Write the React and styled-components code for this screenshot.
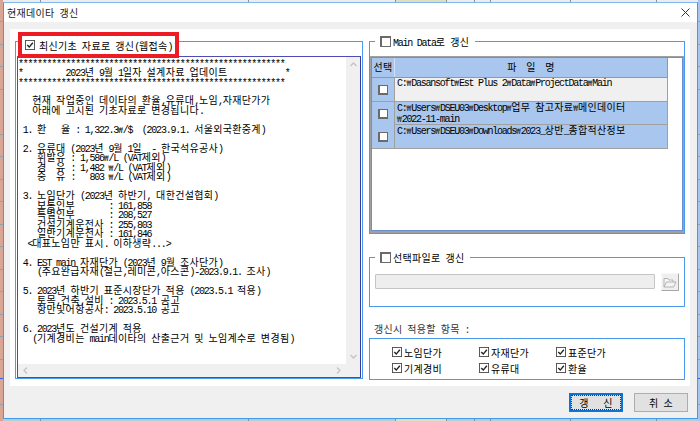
import React from "react";
import styled, {createGlobalStyle} from "styled-components";

const GlobalStyle = createGlobalStyle`
  html, body {
    margin: 0;
    padding: 0;
  }
  * {
    box-sizing: border-box;
  }
`;

// the spreadsheet that shows around the dialog
const Desktop = styled.div`
  width: 700px;
  height: 421px;
  overflow: hidden;
  padding: 2px 2px 2px 3px;
  background:
    linear-gradient(#3a5fd8, #3a5fd8) 0 378px / 100% 1px no-repeat,
    repeating-linear-gradient(180deg, transparent 0 21.5px, #8fa0b0 21.5px 22.5px),
    linear-gradient(90deg, transparent 40px, #8a9298 40px 41px, transparent 41px 248px, #8a9298 248px 249px, transparent 249px 395px, #8a9298 395px 396px, #e2dcc0 396px 446px, #8a9298 446px 447px, transparent 447px 474px, #8a9298 474px 475px, transparent 475px 490px, #8a9298 490px 491px, transparent 491px 570px, #8a9298 570px 571px, transparent 571px 656px, #8a9298 656px 657px, transparent 657px),
    linear-gradient(#ececec, #ececec) 3px 0 / 695px 2px no-repeat,
    linear-gradient(90deg, #dba596 0 3px, #bccad2 3px 698px, #a9c7ee 698px);
`;

const Window = styled.div`
  width: 695px;
  height: 417px;
  display: flex;
  flex-direction: column;
  background: #f0f0f0;
  border: 1px solid #3f9ae8;
  border-top-color: #7fb8ee;
  color: #000;
  font-size: 10px;
  white-space: pre;
`;

const TitleBar = styled.div`
  height: 19px;
  flex: none;
  display: flex;
  align-items: center;
  justify-content: space-between;
  padding: 0 7px 0 3px;
  background: #fff;
  color: #222;
`;

const CloseIcon = styled.svg`
  width: 9px;
  height: 9px;
  stroke: #333;
  stroke-width: 1;
  fill: none;
`;

const Panel = styled.div`
  flex: none;
  margin: 7px 7px 0 6px;
  height: 357px;
  padding: 12px 5px 7px;
  background: #fff;
  display: grid;
  grid-template-columns: 348px 316px;
  column-gap: 6px;
`;

const Group = styled.div`
  position: relative;
  border: 1px solid #4a9af0;
`;

const LeftGroup = styled(Group)`
  height: 338px;
  padding: 14px 1px 0;
`;

const RightColumn = styled.div`
  display: flex;
  flex-direction: column;
`;

const MainGroup = styled(Group)`
  height: 193px;
  padding-top: 14px;
`;

const FileGroup = styled(Group)`
  height: 50px;
  margin-top: 23px;
  padding: 16px 5px 0;
  display: flex;
  align-items: flex-start;
  gap: 6px;
`;

const Legend = styled.div`
  position: absolute;
  top: -8px;
  left: 5px;
  height: 15px;
  padding: 0 6px 0 5px;
  background: #fff;
  display: flex;
  align-items: center;
  gap: 2px;
`;

const RedLegend = styled(Legend)`
  top: -10px;
  left: 2px;
  width: 161px;
  height: 26px;
  padding: 0 0 0 3px;
  border: 4px solid #ed1c24;
  gap: 4px;
`;

const TextBox = styled.div`
  height: 322px;
  display: grid;
  grid-template-columns: 1fr 14px;
  grid-template-rows: 1fr 13px;
  border: 1px solid #4c4cb4;
  border-right-color: #3a3aa0;
`;

const NoticeText = styled.div`
  overflow: hidden;
  background: #fff;
`;

const NoticeLine = styled.div`
  height: 9.52px;
  line-height: 9.52px;
`;

// asterisks sit high in the latin font, so a full row of them is nudged down
const StarLine = styled(NoticeLine)`
  transform: translateY(2px);
`;

const Hangul = styled.span`
  font-family: "Noto Sans CJK KR", sans-serif;
  font-size: 10px;
  letter-spacing: 0.32px;
`;

const Latin = styled.span`
  font-family: "Liberation Mono", "DejaVu Sans Mono", monospace;
  font-size: 10px;
  letter-spacing: -1.24px;
`;

const Won = styled.span`
  font-family: "DejaVu Sans Mono", monospace;
  font-size: 7.9px;
  color: #333;
`;

const ScrollTrack = styled.div`
  background: #f0f0f0;
  display: flex;
  align-items: center;
  justify-content: space-between;
  flex-direction: ${p => (p.$vertical ? "column" : "row")};
  padding: ${p => (p.$vertical ? "4px 0" : "0 4px")};
`;

const ScrollCorner = styled.div`
  background: #f0f0f0;
`;

const Chevron = styled.svg`
  width: 7px;
  height: 7px;
  fill: none;
  stroke: #c4c4c4;
  stroke-width: 1.3;
`;

const Grid = styled.div`
  height: 177px;
  padding: 1px;
  border: 1px solid #a0a0a0;
  border-width: 1px 1px 2px;
  box-shadow: inset 0 0 0 1px #6d8fd0;
  background: #fff;
`;

const Row = styled.div`
  width: 296px;
  height: ${p => p.$height}px;
  display: grid;
  grid-template-columns: 23px 1fr;
  background: ${p => (p.$plain ? "#f0f0f0" : "#a9c7ee")};
  border-bottom: ${p => (p.$head ? "1px solid #6d9fe0" : "1px solid #a0a0a0")};
  line-height: 10px;
`;

const HeadCell = styled.div`
  display: flex;
  align-items: center;
  justify-content: center;
  background: #a9c7ee;
  border-right: 1px solid ${p => (p.$last ? "#6d9fe0" : "#cfe0f6")};
`;

const SelectCell = styled.div`
  display: flex;
  align-items: center;
  justify-content: center;
  background: #a9c7ee;
  border-right: 1px solid #a0a0a0;
`;

const PathCell = styled.div`
  padding: 0 0 0 2px;
  border-right: 1px solid #a0a0a0;
`;

const EmptyBox = styled.span`
  display: inline-block;
  flex: none;
  width: ${p => (p.$large ? 11 : 10)}px;
  height: ${p => (p.$large ? 11 : 10)}px;
  background: #fff;
  border: 2px solid #6a6a6a;
  border-width: ${p => (p.$large ? "2px 1px 1px 2px" : "1px 1px 2px 2px")};
`;

const TickBox = styled.svg`
  flex: none;
  width: 10px;
  height: 10px;
`;

const PathInput = styled.div`
  width: 281px;
  height: 15px;
  background: #eeeeee;
  border: 1px solid #c4c4c4;
  border-radius: 1px;
`;

const FolderButton = styled.div`
  flex: none;
  width: 18px;
  height: 18px;
  margin-top: -1px;
  display: flex;
  align-items: center;
  justify-content: center;
  background: #efefef;
  border: 1px solid #f8f8f8;
  border-right-color: #a8a8a8;
  border-bottom-color: #a8a8a8;
`;

const FolderIcon = styled.svg`
  width: 14px;
  height: 13px;
  fill: #f4f4f4;
  stroke: #b4b4b4;
  stroke-width: 1;
`;

const SectionLabel = styled.div`
  height: 31px;
  padding: 15px 0 0 5px;
  line-height: 13px;
  color: #333;
`;

const ItemGroup = styled(Group)`
  height: 42px;
  padding: 5px 0 0 22px;
  display: grid;
  grid-template-columns: 87px 77px 1fr;
  grid-auto-rows: 16px;
`;

const Item = styled.label`
  display: flex;
  align-items: center;
  gap: 2px;
`;

const Footer = styled.div`
  flex: 1;
  display: flex;
  justify-content: flex-end;
  align-items: flex-start;
  gap: 11px;
  padding: 7px 9px 0 0;
`;

const Button = styled.div`
  position: relative;
  width: 54px;
  height: 19px;
  display: flex;
  align-items: center;
  justify-content: center;
  background: #e1e1e1;
  border: ${p => (p.$primary ? "2px solid #0b74d4" : "1px solid #adadad")};
`;

const FocusRing = styled.span`
  position: absolute;
  inset: 0;
  border: 1px dotted #333;
`;

const Tick = () => (
  <TickBox viewBox="0 0 11 11">
    <rect x="0.5" y="0.5" width="10" height="10" fill="#fff" stroke="#4a4a4a" />
    <path d="M2.5 5.5 L4.7 7.8 L8.6 3" fill="none" stroke="#222" strokeWidth="1.5" />
  </TickBox>
);

// hangul is twice as wide as latin here, like GulimChe
const Gulim = ({children}) =>
  (children.match(/₩|[\x00-\x7f]+|[^\x00-\x7f₩]+/g) || []).map((part, i) => {
    if (part === "₩") return <Won key={i}>{part}</Won>;
    if (/^[\x00-\x7f]/.test(part)) return <Latin key={i}>{part}</Latin>;
    return <Hangul key={i}>{part}</Hangul>;
  });

const stars = "*".repeat(56);

const notice = [
  stars,
  "*         2023년 9월 1일자 설계자료 업데이트            *",
  stars,
  "",
  "   현재 작업중인 데이타의 환율,유류대,노임,자재단가가",
  "   아래에 고시된 기초자료로 변경됩니다.",
  "",
  " 1. 환   율 : 1,322.3₩/$  (2023.9.1. 서울외국환중계)",
  "",
  " 2. 유류대 (2023년 9월 1일  - 한국석유공사)",
  "    휘발유 : 1,586₩/L (VAT제외)",
  "    경  유 : 1,482 ₩/L (VAT제외)",
  "    중  유 :   803 ₩/L (VAT제외)",
  "",
  " 3. 노임단가 (2023년 하반기, 대한건설협회)",
  "    보통인부       : 161,858",
  "    특별인부       : 208,527",
  "    건설기계운전사 : 255,803",
  "    일반기계운전사 : 161,846",
  "  <대표노임만 표시. 이하생략...>",
  "",
  " 4. EST main 자재단가 (2023년 9월 조사단가)",
  "    (주요완급자재(철근,레미콘,아스콘)-2023.9.1. 조사)",
  "",
  " 5. 2023년 하반기 표준시장단가 적용 (2023.5.1 적용)",
  "    토목,건축,설비 : 2023.5.1 공고",
  "    항만및어항공사: 2023.5.10 공고",
  "",
  " 6. 2023년도 건설기계 적용",
  "   (기계경비는 main데이타의 산출근거 및 노임계수로 변경됨)",
];

const paths = [
  {lines: ["C:₩Dasansoft₩Est Plus 2₩Data₩ProjectData₩Main"], plain: true, height: 24},
  {lines: ["C:₩Users₩DSEU03₩Desktop₩업무 참고자료₩메인데이터", "₩2022-11-main"], height: 23},
  {lines: ["C:₩Users₩DSEU03₩Downloads₩2023_상반_종합적산정보"], height: 24},
];

const items = ["노임단가", "자재단가", "표준단가", "기계경비", "유류대", "환율"];

export default function App() {
  return (
    <Desktop>
      <GlobalStyle />
      <Window>
        <TitleBar>
          <span><Gulim>현재데이타 갱신</Gulim></span>
          <CloseIcon viewBox="0 0 9 9">
            <path d="M0.5 0.5 L8.5 8.5 M8.5 0.5 L0.5 8.5" />
          </CloseIcon>
        </TitleBar>
        <Panel>
          <LeftGroup>
            <RedLegend>
              <Tick />
              <span><Gulim>최신기초 자료로 갱신(웹접속)</Gulim></span>
            </RedLegend>
            <TextBox>
              <NoticeText>
                {notice.map((line, i) => {
                  const Line = line === stars ? StarLine : NoticeLine;
                  return (
                    <Line key={i}>
                      <Gulim>{line}</Gulim>
                    </Line>
                  );
                })}
              </NoticeText>
              <ScrollTrack $vertical>
                <Chevron viewBox="0 0 7 7"><path d="M0.5 5 L3.5 2 L6.5 5" /></Chevron>
                <Chevron viewBox="0 0 7 7"><path d="M0.5 2 L3.5 5 L6.5 2" /></Chevron>
              </ScrollTrack>
              <ScrollTrack>
                <Chevron viewBox="0 0 7 7"><path d="M5 0.5 L2 3.5 L5 6.5" /></Chevron>
                <Chevron viewBox="0 0 7 7"><path d="M2 0.5 L5 3.5 L2 6.5" /></Chevron>
              </ScrollTrack>
              <ScrollCorner />
            </TextBox>
          </LeftGroup>
          <RightColumn>
            <MainGroup>
              <Legend>
                <EmptyBox $large />
                <span><Gulim>Main Data로 갱신</Gulim></span>
              </Legend>
              <Grid>
                <Row $head $height={20}>
                  <HeadCell><span><Gulim>선택</Gulim></span></HeadCell>
                  <HeadCell $last><span><Gulim>파  일  명</Gulim></span></HeadCell>
                </Row>
                {paths.map((path, i) => (
                  <Row key={i} $plain={path.plain} $height={path.height}>
                    <SelectCell>
                      <EmptyBox />
                    </SelectCell>
                    <PathCell>
                      {path.lines.map(line => (
                        <div key={line}>
                          <Gulim>{line}</Gulim>
                        </div>
                      ))}
                    </PathCell>
                  </Row>
                ))}
              </Grid>
            </MainGroup>
            <FileGroup>
              <Legend>
                <EmptyBox $large />
                <span><Gulim>선택파일로 갱신</Gulim></span>
              </Legend>
              <PathInput />
              <FolderButton>
                <FolderIcon viewBox="0 0 14 13">
                  <path d="M1 11 V2.5 H5 L6 4 H10 V6 M1 11 L3.5 6 H13 L10.5 11 Z" />
                </FolderIcon>
              </FolderButton>
            </FileGroup>
            <SectionLabel><Gulim>갱신시 적용할 항목 :</Gulim></SectionLabel>
            <ItemGroup>
              {items.map(item => (
                <Item key={item}>
                  <Tick />
                  <span><Gulim>{item}</Gulim></span>
                </Item>
              ))}
            </ItemGroup>
          </RightColumn>
        </Panel>
        <Footer>
          <Button $primary>
            <FocusRing />
            <span><Gulim>갱   신</Gulim></span>
          </Button>
          <Button><span><Gulim>취 소</Gulim></span></Button>
        </Footer>
      </Window>
    </Desktop>
  );
}
